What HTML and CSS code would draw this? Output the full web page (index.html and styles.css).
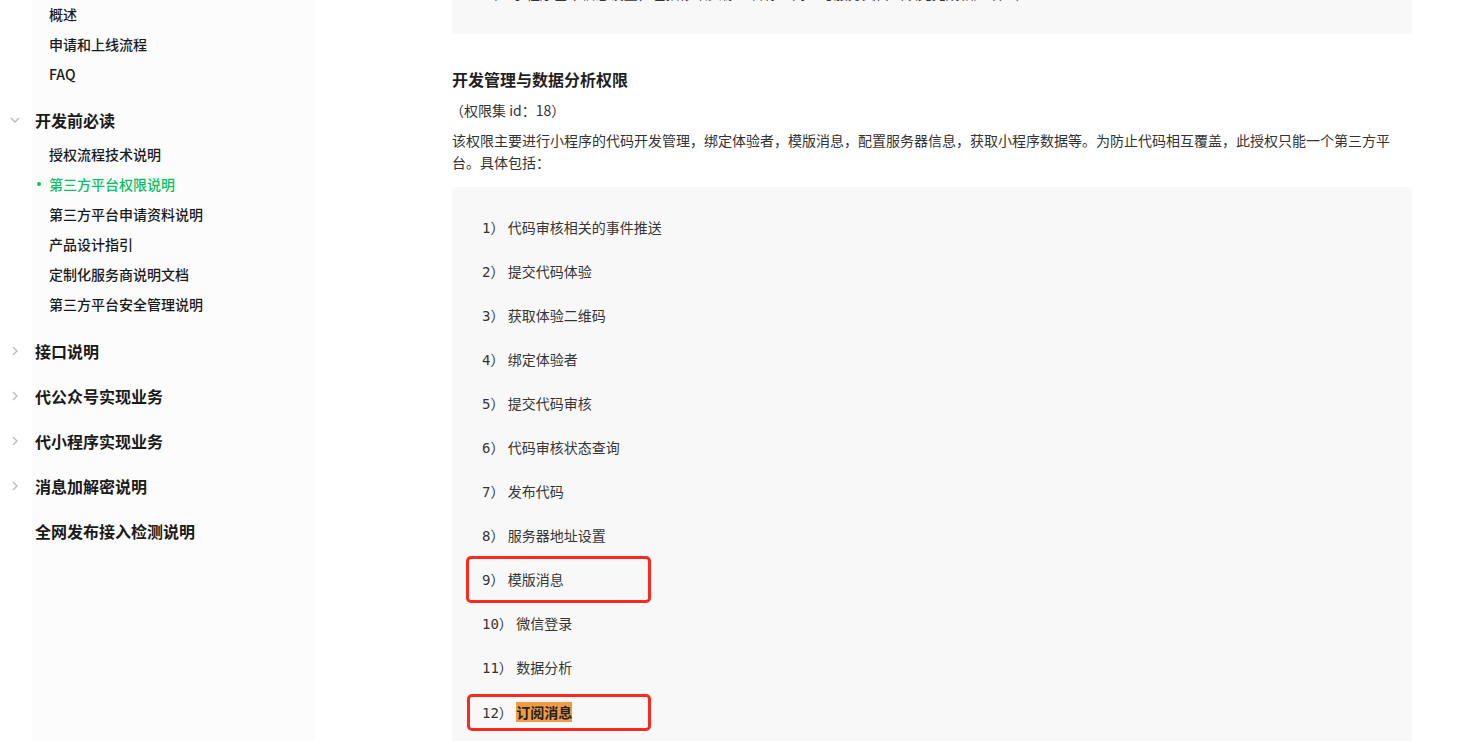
FILE: index.html
```html
<!DOCTYPE html>
<html lang="zh-CN">
<head>
    <meta charset="UTF-8">
    <title>第三方平台权限说明</title>
    <link rel="stylesheet" href="styles.css">
</head>
<body>
    <div class="page">
        <nav class="sidebar">
            <ul class="sub first">
                <li>概述</li>
                <li>申请和上线流程</li>
                <li>FAQ</li>
            </ul>

            <div class="group open">
                <svg class="arrow" viewBox="0 0 12 12"><polyline points="2,4 6,8 10,4"/></svg>
                开发前必读
            </div>
            <ul class="sub">
                <li>授权流程技术说明</li>
                <li class="active">第三方平台权限说明</li>
                <li>第三方平台申请资料说明</li>
                <li>产品设计指引</li>
                <li>定制化服务商说明文档</li>
                <li>第三方平台安全管理说明</li>
            </ul>

            <div class="group">
                <svg class="arrow" viewBox="0 0 12 12"><polyline points="4,2 8,6 4,10"/></svg>
                接口说明
            </div>
            <div class="group">
                <svg class="arrow" viewBox="0 0 12 12"><polyline points="4,2 8,6 4,10"/></svg>
                代公众号实现业务
            </div>
            <div class="group">
                <svg class="arrow" viewBox="0 0 12 12"><polyline points="4,2 8,6 4,10"/></svg>
                代小程序实现业务
            </div>
            <div class="group">
                <svg class="arrow" viewBox="0 0 12 12"><polyline points="4,2 8,6 4,10"/></svg>
                消息加解密说明
            </div>
            <div class="group">
                <span class="arrow"></span>
                全网发布接入检测说明
            </div>
        </nav>

        <main class="content">
            <div class="box top">
                <ul class="items">
                    <li>8） 小程序基本信息设置，包括修改头像、名称、简介与服务类目（须先完成相应认证）</li>
                </ul>
            </div>

            <h3 class="title">开发管理与数据分析权限</h3>
            <p class="setid">（权限集 id：18）</p>
            <p>该权限主要进行小程序的代码开发管理，绑定体验者，模版消息，配置服务器信息，获取小程序数据等。为防止代码相互覆盖，此授权只能一个第三方平台。具体包括：</p>

            <div class="box">
                <ul class="items">
                    <li>1） 代码审核相关的事件推送</li>
                    <li>2） 提交代码体验</li>
                    <li>3） 获取体验二维码</li>
                    <li>4） 绑定体验者</li>
                    <li>5） 提交代码审核</li>
                    <li>6） 代码审核状态查询</li>
                    <li>7） 发布代码</li>
                    <li>8） 服务器地址设置</li>
                    <li>9） 模版消息<span class="mark one"></span></li>
                    <li>10） 微信登录</li>
                    <li>11） 数据分析</li>
                    <li>12） <b class="hl">订阅消息</b><span class="mark two"></span></li>
                </ul>
            </div>
        </main>
    </div>
</body>
</html>
```

FILE: styles.css
```css
body {margin: 0; background: #ffffff; color: #333333; font-family: "Noto Sans CJK SC", "Liberation Sans", sans-serif; font-size: 14px; overflow: hidden;}
ul {list-style: none; margin: 0; padding: 0;}
.page {display: flex; align-items: flex-start;}

/* sidebar */
.sidebar {width: 283px; margin-left: 32px; min-height: 760px; background: #fcfcfc;}
.sub {margin: -3px 0 9px;}
.sub.first {margin: -1px 0 8px;}
.sub li {height: 30px; line-height: 30px; padding-left: 17px; font-weight: 500; color: #1a1a1a; position: relative;}
.sub li.active {color: #07c160;}
.sub li.active::before {content: ""; position: absolute; left: 5px; top: 13px; width: 4px; height: 4px; border-radius: 50%; background: #07c160;}
.group {display: flex; align-items: center; height: 45px; margin-left: -32px; font-size: 16px; font-weight: 600; color: #1a1a1a;}
.arrow {width: 12px; height: 12px; margin: 0 14px 0 9px; flex: none;}
.arrow polyline {fill: none; stroke: #b8b8b8; stroke-width: 1.3;}

/* content */
.content {width: 960px; margin-left: 137px;}
.box {background: #f8f8f8; border-radius: 4px; padding: 19px 0;}
.box.top {margin-top: -47px; padding-bottom: 18px;}
.items li {height: 44px; line-height: 44px; padding-left: 30px; font-family: "DejaVu Sans Mono", "Noto Sans CJK SC", monospace; font-size: 14px; word-spacing: -5px; color: #353535; position: relative;}
.box.top li {padding-left: 34px;}
.title {margin: 33px 0 0; font-size: 16px; line-height: 24px; font-weight: 600; color: #1f1f1f;}
.content p {margin: 8px 0 0; line-height: 22px; color: #333333;}
.content p.setid {margin-left: -2px;}
.content .box:last-child {margin-top: 14px;}
.hl {background: #f29b42; color: #222222; font-family: "Noto Sans CJK SC", sans-serif;}

/* red annotation frames */
.mark {position: absolute; border: 3px solid #fa2b1e; border-radius: 5px; box-sizing: border-box;}
.mark.one {left: 14px; top: -2px; width: 185px; height: 47px;}
.mark.two {left: 15px; top: 4px; width: 184px; height: 37px;}
```
